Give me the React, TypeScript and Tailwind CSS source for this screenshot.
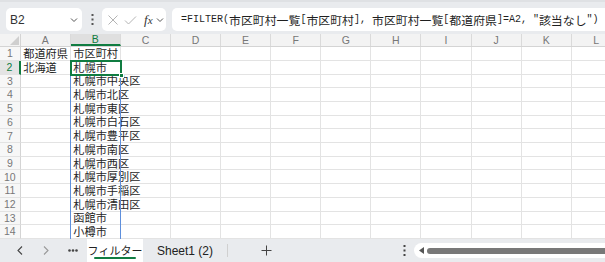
import React from "react";

const COLS = ["A", "B", "C", "D", "E", "F", "G", "H", "I", "J", "K", "L"];
const ROWS = 14;
const data: Record<string, string> = {
  A1: "都道府県",
  B1: "市区町村",
  A2: "北海道",
  B2: "札幌市",
  B3: "札幌市中央区",
  B4: "札幌市北区",
  B5: "札幌市東区",
  B6: "札幌市白石区",
  B7: "札幌市豊平区",
  B8: "札幌市南区",
  B9: "札幌市西区",
  B10: "札幌市厚別区",
  B11: "札幌市手稲区",
  B12: "札幌市清田区",
  B13: "函館市",
  B14: "小樽市",
};

const cjk = { fontFamily: '"Noto Sans CJK JP", "Noto Sans", sans-serif' };
const mono = { fontFamily: '"Liberation Mono", "DejaVu Sans Mono", monospace' };

function M({ t }: { t: string }) {
  return (
    <span className="text-[10px] whitespace-pre" style={mono}>
      {t}
    </span>
  );
}
function J({ t }: { t: string }) {
  return (
    <span className="text-[11.9px]" style={cjk}>
      {t}
    </span>
  );
}

function Chevron({ className = "" }: { className?: string }) {
  return (
    <svg className={className} width="8" height="6" viewBox="0 0 8 6" fill="none">
      <path d="M1 1.5 L4 4.5 L7 1.5" stroke="#555" strokeWidth="1" />
    </svg>
  );
}

export default function App() {
  return (
    <div
      className="w-[605px] h-[262px] overflow-hidden bg-white flex flex-col relative"
      style={{ fontFamily: '"Noto Sans", "Liberation Sans", sans-serif' }}
    >
      {/* Formula bar */}
      <div className="h-[34px] bg-[#e9ebee] border-t-[2px] border-[#dfe1e4] flex items-center pt-[3px] pl-[6px] gap-0 shrink-0">
        <div className="w-[76px] h-[23px] bg-white rounded-[5px] flex items-center justify-between pl-[4px] pr-[4px]">
          <span className="text-[12px] text-[#333]" style={{ fontFamily: '"Liberation Sans", sans-serif' }}>
            B2
          </span>
          <Chevron />
        </div>
        <div className="w-[20px] flex justify-center">
          <svg width="3" height="11" viewBox="0 0 3 11">
            <rect x="0.5" y="0" width="2" height="2" fill="#555" />
            <rect x="0.5" y="4.5" width="2" height="2" fill="#555" />
            <rect x="0.5" y="9" width="2" height="2" fill="#555" />
          </svg>
        </div>
        <div className="w-[64px] h-[23px] bg-white rounded-[5px] flex items-center pl-[5px] gap-[5px]">
          <svg width="12" height="12" viewBox="0 0 12 12">
            <path d="M1.5 1.5 L10.5 10.5 M10.5 1.5 L1.5 10.5" stroke="#b4b4b4" strokeWidth="1" />
          </svg>
          <svg width="13" height="12" viewBox="0 0 13 12">
            <path d="M1 6.5 L4.5 10 L12 2.5" stroke="#b4b4b4" strokeWidth="1" fill="none" />
          </svg>
          <span
            className="text-[13px] italic text-[#333] leading-none ml-[2px]"
            style={{ fontFamily: '"Liberation Serif", serif' }}
          >
            f<span className="text-[11px]">x</span>
          </span>
          <Chevron className="ml-[-2px]" />
        </div>
        <div className="ml-[6px] flex-1 h-[23px] bg-white rounded-l-[5px] flex items-center pl-[9px] text-[#1f1f1f] whitespace-nowrap">
          <M t="=FILTER(" />
          <J t="市区町村一覧" />
          <M t="[" />
          <J t="市区町村" />
          <M t="], " />
          <J t="市区町村一覧" />
          <M t="[" />
          <J t="都道府県" />
          <M t={']=A2, "'} />
          <J t="該当なし" />
          <M t={'")'} />
        </div>
      </div>

      {/* Grid */}
      <div className="relative flex-1 overflow-hidden">
        {/* header row */}
        <div className="flex h-[13.3px] bg-[#f3f3f3] border-b border-[#d4d4d4]">
          <div className="w-[20.7px] shrink-0 border-r border-[#d4d4d4] relative">
            <svg className="absolute right-[1px] bottom-[1px]" width="9" height="9" viewBox="0 0 9 9">
              <path d="M9 0 L9 9 L0 9 Z" fill="#cfcfcf" />
            </svg>
          </div>
          {COLS.map((c) => (
            <div
              key={c}
              className={`w-[50.1px] shrink-0 border-r border-[#dadada] flex items-center justify-center text-[10.5px] leading-none ${
                c === "B" ? "bg-[#dfdfdf] text-[#107c41] border-b-[2px] border-b-[#107c41]" : "text-[#777]"
              }`}
              style={{ fontFamily: '"Liberation Sans", sans-serif' }}
            >
              {c}
            </div>
          ))}
        </div>
        {Array.from({ length: ROWS }, (_, i) => i + 1).map((r) => (
          <div key={r} className="flex h-[13.7px]">
            <div
              className={`w-[20.7px] shrink-0 border-b border-[#e3e3e3] flex items-center justify-center text-[10.5px] leading-none ${
                r === 2
                  ? "bg-[#e4e4e4] text-[#107c41] border-r-[2px] border-r-[#107c41]"
                  : "bg-[#f7f7f7] text-[#777] border-r border-r-[#d4d4d4]"
              }`}
              style={{ fontFamily: '"Liberation Sans", sans-serif' }}
            >
              {r}
            </div>
            {COLS.map((c) => {
              const v = data[`${c}${r}`];
              return (
                <div
                  key={c}
                  className="w-[50.1px] shrink-0 border-r border-b border-[#e3e3e3] flex items-center pl-[2.5px] text-[11.2px] leading-none text-[#262626] whitespace-nowrap overflow-visible"
                  style={cjk}
                >
                  {v ?? ""}
                </div>
              );
            })}
          </div>
        ))}

        {/* spill range border */}
        <div className="absolute left-[70.3px] top-[40.7px] w-[51px] h-[200px] border-l border-r border-[#5e8fdc]" />
        {/* selection */}
        <div className="absolute left-[69.8px] top-[26px] w-[52px] h-[15.7px] border-[2px] border-[#107c41]">
          <div className="absolute right-[-4px] bottom-[-4px] w-[5px] h-[5px] bg-[#107c41] border border-white" />
        </div>
      </div>

      {/* Sheet tab bar */}
      <div className="h-[23px] shrink-0 bg-[#e9ebee] flex items-stretch relative">
        <div className="w-[87px] flex items-center text-[#444]">
          <svg className="ml-[17px]" width="6" height="9" viewBox="0 0 6 9">
            <path d="M5 0.5 L1 4.5 L5 8.5" stroke="#444" strokeWidth="1.1" fill="none" />
          </svg>
          <svg className="ml-[20px]" width="6" height="9" viewBox="0 0 6 9">
            <path d="M1 0.5 L5 4.5 L1 8.5" stroke="#999" strokeWidth="1.1" fill="none" />
          </svg>
          <svg className="ml-[19px]" width="10" height="3" viewBox="0 0 10 3">
            <circle cx="1.5" cy="1.5" r="1.3" fill="#444" />
            <circle cx="5" cy="1.5" r="1.3" fill="#444" />
            <circle cx="8.5" cy="1.5" r="1.3" fill="#444" />
          </svg>
        </div>
        <div className="w-[56px] bg-white flex flex-col items-center justify-center relative">
          <span className="text-[11px] text-[#222] leading-none" style={cjk}>
            フィルター
          </span>
          <div className="absolute left-[7px] right-[7px] bottom-[3px] h-[2px] bg-[#107c41] rounded" />
        </div>
        <div className="flex items-center pl-[14px] w-[84px]">
          <span className="text-[12px] text-[#222] leading-none" style={{ fontFamily: '"Liberation Sans", sans-serif' }}>
            Sheet1 (2)
          </span>
        </div>
        <div className="w-px bg-[#d0d0d0] my-[5px]" />
        <div className="flex items-center pl-[33px]">
          <svg width="11" height="11" viewBox="0 0 11 11">
            <path d="M5.5 0.5 V10.5 M0.5 5.5 H10.5" stroke="#444" strokeWidth="1" />
          </svg>
        </div>
        <div className="flex items-center ml-[131px]">
          <svg width="3" height="11" viewBox="0 0 3 11">
            <rect x="0.5" y="0" width="2" height="2" fill="#444" />
            <rect x="0.5" y="4.5" width="2" height="2" fill="#444" />
            <rect x="0.5" y="9" width="2" height="2" fill="#444" />
          </svg>
        </div>
        <div className="flex-1 ml-[8px] my-[4px] bg-white rounded-l-full flex items-center pl-[5px]">
          <svg width="5" height="7" viewBox="0 0 5 7">
            <path d="M5 0 L0 3.5 L5 7 Z" fill="#555" />
          </svg>
          <div className="ml-[3px] flex-1 h-[6px] bg-[#787878] rounded-l-full" />
        </div>
      </div>
    </div>
  );
}
